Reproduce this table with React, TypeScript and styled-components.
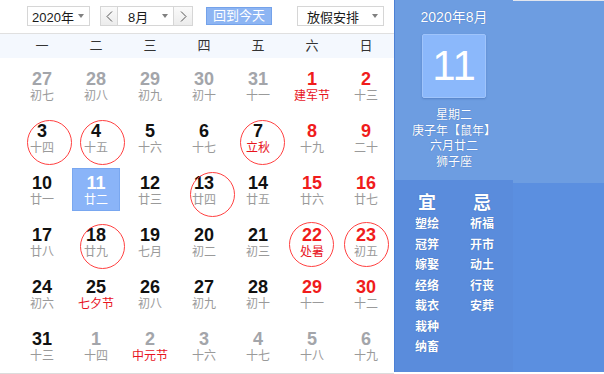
import React from "react";
import styled, { createGlobalStyle } from "styled-components";

const Global = createGlobalStyle`
  html, body {
    margin: 0;
    padding: 0;
    background: #fff;
  }
  body {
    width: 604px;
    height: 374px;
    overflow: hidden;
    font-family: "Liberation Sans", "Noto Sans CJK SC", sans-serif;
  }
`;

type Tone = "dim" | "normal" | "red";

interface Cell {
  day: number;
  lunar: string;
  tone: Tone;
  festival?: boolean;
  today?: boolean;
  ring?: [number, number];
}

const cell = (day: number, lunar: string, tone: Tone, extra: Partial<Cell> = {}): Cell => ({
  day,
  lunar,
  tone,
  ...extra,
});

const weeks: Cell[][] = [
  [
    cell(27, "初七", "dim"),
    cell(28, "初八", "dim"),
    cell(29, "初九", "dim"),
    cell(30, "初十", "dim"),
    cell(31, "十一", "dim"),
    cell(1, "建军节", "red", { festival: true }),
    cell(2, "十三", "red"),
  ],
  [
    cell(3, "十四", "normal", { ring: [12, 7] }),
    cell(4, "十五", "normal", { ring: [11, 7] }),
    cell(5, "十六", "normal"),
    cell(6, "十七", "normal"),
    cell(7, "立秋", "normal", { festival: true, ring: [9, 7] }),
    cell(8, "十九", "red"),
    cell(9, "二十", "red"),
  ],
  [
    cell(10, "廿一", "normal"),
    cell(11, "廿二", "normal", { today: true }),
    cell(12, "廿三", "normal"),
    cell(13, "廿四", "normal", { ring: [13, 7] }),
    cell(14, "廿五", "normal"),
    cell(15, "廿六", "red"),
    cell(16, "廿七", "red"),
  ],
  [
    cell(17, "廿八", "normal"),
    cell(18, "廿九", "normal", { ring: [11, 7] }),
    cell(19, "七月", "normal"),
    cell(20, "初二", "normal"),
    cell(21, "初三", "normal"),
    cell(22, "处暑", "red", { festival: true, ring: [4, 5] }),
    cell(23, "初五", "red", { ring: [5, 5] }),
  ],
  [
    cell(24, "初六", "normal"),
    cell(25, "七夕节", "normal", { festival: true }),
    cell(26, "初八", "normal"),
    cell(27, "初九", "normal"),
    cell(28, "初十", "normal"),
    cell(29, "十一", "red"),
    cell(30, "十二", "red"),
  ],
  [
    cell(31, "十三", "normal"),
    cell(1, "十四", "dim"),
    cell(2, "中元节", "dim", { festival: true }),
    cell(3, "十六", "dim"),
    cell(4, "十七", "dim"),
    cell(5, "十八", "dim"),
    cell(6, "十九", "dim"),
  ],
];

const weekdays = ["一", "二", "三", "四", "五", "六", "日"];
const good = ["塑绘", "冠笄", "嫁娶", "经络", "裁衣", "栽种", "纳畜"];
const bad = ["祈福", "开市", "动土", "行丧", "安葬"];

const Page = styled.div`
  display: flex;
  width: 604px;
  height: 374px;
`;

const Calendar = styled.div`
  width: 394px;
  height: 374px;
  display: flex;
  flex-direction: column;
  box-sizing: border-box;
  border-bottom: 1px solid #dcdcdc;
  overflow: hidden;
`;

const Toolbar = styled.div`
  height: 36px;
  box-sizing: border-box;
  border-bottom: 1px solid #e0e0e0;
  padding: 6px 0 0 27px;
  display: flex;
  align-items: flex-start;
`;

const Select = styled.div<{ $w: number; $ml?: number }>`
  width: ${(p) => p.$w}px;
  height: 20px;
  margin-left: ${(p) => p.$ml ?? 0}px;
  box-sizing: border-box;
  border: 1px solid #d6d6d6;
  background: #fff;
  display: flex;
  align-items: center;
  justify-content: space-between;
  padding: 0 5px 0 4px;
  font-size: 13px;
  color: #1a1a1a;
`;

const Caret = styled.span`
  width: 0;
  height: 0;
  border-left: 3.5px solid transparent;
  border-right: 3.5px solid transparent;
  border-top: 4px solid #808080;
`;

const MonthGroup = styled.div`
  display: flex;
  margin-left: 10px;
`;

const ArrowBtn = styled.div<{ $w: number }>`
  width: ${(p) => p.$w}px;
  height: 20px;
  box-sizing: border-box;
  border: 1px solid #d6d6d6;
  background: linear-gradient(#fafafa, #ececec);
  display: flex;
  align-items: center;
  justify-content: center;
`;

const MonthSelect = styled(Select)`
  border-left: none;
  border-right: none;
  padding-left: 10px;
`;

const TodayBtn = styled.div`
  width: 66px;
  height: 18px;
  margin: 1px 0 0 13px;
  box-sizing: border-box;
  border: 1px solid #74a2ea;
  background: #8db5f3;
  color: #fff;
  font-size: 13px;
  line-height: 16px;
  text-align: center;
`;

const HeadRow = styled.div`
  height: 24px;
  background: #f4f8fe;
  display: grid;
  grid-template-columns: repeat(7, 54px);
  padding-left: 15px;
`;

const HeadCell = styled.div`
  font-size: 13px;
  color: #333;
  line-height: 24px;
  text-align: center;
`;

const Grid = styled.div`
  display: grid;
  grid-template-columns: repeat(7, 54px);
  grid-auto-rows: 52px;
  padding: 3px 0 0 15px;
`;

const CellBox = styled.div`
  position: relative;
`;

const Day = styled.div<{ $today?: boolean }>`
  width: 48px;
  height: 43px;
  margin: 3px auto 0;
  box-sizing: border-box;
  padding-top: 4px;
  text-align: center;
  background: ${(p) => (p.$today ? "#8ab4f8" : "transparent")};
  border: 1px solid ${(p) => (p.$today ? "#79a7f0" : "transparent")};
`;

const toneColor: Record<Tone, string> = {
  dim: "#a3a5aa",
  normal: "#111",
  red: "#f01c1c",
};

const Num = styled.div<{ $tone: Tone; $today?: boolean }>`
  font-size: 18px;
  font-weight: bold;
  line-height: 20px;
  color: ${(p) => (p.$today ? "#fff" : toneColor[p.$tone])};
`;

const Lunar = styled.div<{ $festival?: boolean; $today?: boolean }>`
  font-size: 12px;
  line-height: 16px;
  margin-top: -1px;
  color: ${(p) => (p.$today ? "#fff" : p.$festival ? "#e8141e" : "#9a9a9a")};
`;

const Ring = styled.div`
  position: absolute;
  width: 45px;
  height: 45px;
  box-sizing: border-box;
  border: 1px solid #ff4040;
  border-radius: 50%;
  pointer-events: none;
`;

const Panel = styled.div`
  flex: 1;
  height: 372px;
  display: flex;
  border-left: 1px solid #4c80d4;
`;

const InfoCol = styled.div`
  width: 118px;
  display: flex;
  flex-direction: column;
`;

const InfoTop = styled.div`
  height: 180px;
  background: #6d9de1;
  padding-top: 8px;
  box-sizing: border-box;
  display: flex;
  flex-direction: column;
  align-items: center;
  color: #fff;
  text-shadow: 0 0 1px #2c5fb2;
`;

const MonthTitle = styled.div`
  font-size: 14px;
  line-height: 18px;
`;

const DateBox = styled.div`
  width: 64px;
  height: 64px;
  margin-top: 8px;
  box-sizing: border-box;
  background: #8bb8fb;
  border: 1px solid #9fc4fb;
  border-radius: 2px;
  box-shadow: 0 1px 2px rgba(30, 70, 140, 0.3);
  font-size: 42px;
  line-height: 62px;
  text-align: center;
  text-shadow: none;
`;

const InfoLines = styled.div`
  margin-top: 10px;
  font-size: 12px;
  line-height: 15.5px;
  text-align: center;
`;

const InfoBottom = styled.div`
  flex: 1;
  background: #5a8cdc;
  padding: 12px 0 0 17px;
  display: flex;
  gap: 25px;
  color: #fff;
  text-shadow: 0 0 1px #2a5aa8;
`;

const LuckCol = styled.div`
  width: 30px;
  display: flex;
  flex-direction: column;
  align-items: center;
`;

const LuckTitle = styled.div`
  font-size: 18px;
  font-weight: bold;
  line-height: 22px;
`;

const LuckItem = styled.div`
  font-size: 12px;
  font-weight: bold;
  line-height: 20.5px;
`;

const Filler = styled.div`
  flex: 1;
  display: flex;
  flex-direction: column;
`;

const FillerTop = styled.div`
  height: 183px;
  box-sizing: border-box;
  border-top: 1px solid #e2e6ee;
  background: #6d9de1;
`;

const FillerBottom = styled.div`
  flex: 1;
  background: #5b8fe0;
`;

const Chevron = ({ dir }: { dir: "l" | "r" }) => (
  <svg width="7" height="11" viewBox="0 0 7 11">
    <polyline
      points={dir === "l" ? "6,0.5 1,5.5 6,10.5" : "1,0.5 6,5.5 1,10.5"}
      fill="none"
      stroke="#555"
      strokeWidth="1"
    />
  </svg>
);

export default function App() {
  return (
    <>
      <Global />
      <Page>
        <Calendar>
          <Toolbar>
            <Select $w={63}>
              2020年
              <Caret />
            </Select>
            <MonthGroup>
              <ArrowBtn $w={18}>
                <Chevron dir="l" />
              </ArrowBtn>
              <MonthSelect $w={55}>
                8月
                <Caret />
              </MonthSelect>
              <ArrowBtn $w={20}>
                <Chevron dir="r" />
              </ArrowBtn>
            </MonthGroup>
            <TodayBtn>回到今天</TodayBtn>
            <Select $w={87} $ml={25}>
              <span style={{ paddingLeft: 5 }}>放假安排</span>
              <Caret />
            </Select>
          </Toolbar>
          <HeadRow>
            {weekdays.map((w) => (
              <HeadCell key={w}>{w}</HeadCell>
            ))}
          </HeadRow>
          <Grid>
            {weeks.flat().map((c, i) => (
              <CellBox key={i}>
                <Day $today={c.today}>
                  <Num $tone={c.tone} $today={c.today}>
                    {c.day}
                  </Num>
                  <Lunar $festival={c.festival} $today={c.today}>
                    {c.lunar}
                  </Lunar>
                </Day>
                {c.ring && <Ring style={{ left: c.ring[0], top: c.ring[1] }} />}
              </CellBox>
            ))}
          </Grid>
        </Calendar>
        <Panel>
          <InfoCol>
            <InfoTop>
              <MonthTitle>2020年8月</MonthTitle>
              <DateBox>11</DateBox>
              <InfoLines>
                <div>星期二</div>
                <div>庚子年【鼠年】</div>
                <div>六月廿二</div>
                <div>狮子座</div>
              </InfoLines>
            </InfoTop>
            <InfoBottom>
              <LuckCol>
                <LuckTitle>宜</LuckTitle>
                {good.map((g) => (
                  <LuckItem key={g}>{g}</LuckItem>
                ))}
              </LuckCol>
              <LuckCol>
                <LuckTitle>忌</LuckTitle>
                {bad.map((b) => (
                  <LuckItem key={b}>{b}</LuckItem>
                ))}
              </LuckCol>
            </InfoBottom>
          </InfoCol>
          <Filler>
            <FillerTop />
            <FillerBottom />
          </Filler>
        </Panel>
      </Page>
    </>
  );
}
